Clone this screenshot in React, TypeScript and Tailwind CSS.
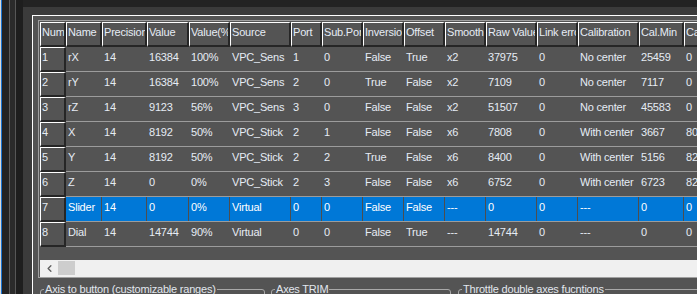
import { ChevronLeft } from "lucide-react";

type Col = { label: string; w: string };

const COLS: Col[] = [
  { label: "Name", w: "w-[36px]" },
  { label: "Precision", w: "w-[45px]" },
  { label: "Value", w: "w-[42px]" },
  { label: "Value(%)", w: "w-[41px]" },
  { label: "Source", w: "w-[61px]" },
  { label: "Port", w: "w-[31px]" },
  { label: "Sub.Port", w: "w-[41px]" },
  { label: "Inversion", w: "w-[41px]" },
  { label: "Offset", w: "w-[41px]" },
  { label: "Smooth", w: "w-[41px]" },
  { label: "Raw Value", w: "w-[51px]" },
  { label: "Link error", w: "w-[41px]" },
  { label: "Calibration", w: "w-[61px]" },
  { label: "Cal.Min", w: "w-[45px]" },
  { label: "Cal.Max", w: "w-[45px]" },
];

const ROWS: string[][] = [
  ["rX", "14", "16384", "100%", "VPC_Sens", "1", "0", "False", "True", "x2", "37975", "0", "No center", "25459", "0"],
  ["rY", "14", "16384", "100%", "VPC_Sens", "2", "0", "True", "False", "x2", "7109", "0", "No center", "7117", "0"],
  ["rZ", "14", "9123", "56%", "VPC_Sens", "3", "0", "False", "False", "x2", "51507", "0", "No center", "45583", "0"],
  ["X", "14", "8192", "50%", "VPC_Stick", "2", "1", "False", "False", "x6", "7808", "0", "With center", "3667", "8047"],
  ["Y", "14", "8192", "50%", "VPC_Stick", "2", "2", "True", "False", "x6", "8400", "0", "With center", "5156", "8252"],
  ["Z", "14", "0", "0%", "VPC_Stick", "2", "3", "False", "False", "x6", "6752", "0", "With center", "6723", "8288"],
  ["Slider", "14", "0", "0%", "Virtual", "0", "0", "False", "False", "---", "0", "0", "---", "0", "0"],
  ["Dial", "14", "14744", "90%", "Virtual", "0", "0", "False", "True", "---", "14744", "0", "---", "0", "0"],
];

const SELECTED = 6;

export default function App() {
  return (
    <div className="w-[697px] h-[294px] overflow-hidden flex bg-[#232323] font-['Liberation_Sans',Arial,sans-serif] text-[11px] leading-[14px] tracking-[-0.2px] text-[#e6ecf4]">
      {/* neighbouring window edges */}
      <div className="flex shrink-0">
        <div className="w-[1px] bg-[#d9d9d9]" />
        <div className="w-[1px] bg-[#1a74d2]" />
        <div className="w-[7px]" />
        <div className="w-[1px] bg-[#5c5c5c]" />
        <div className="w-[5px] bg-[#2b2b2b]" />
        <div className="w-[1px] bg-[#575757]" />
        <div className="w-[7px] bg-[#1e1e1e]" />
      </div>

      <div className="flex-1 min-w-0 flex flex-col pt-[7px]">
        <div className="flex-1 bg-[#3b3b3b] pl-[9px] pt-[8px]">
          <div className="h-full border-l border-t border-white bg-[#545454] pl-[5px] pt-[4px] flex flex-col">
            {/* grid */}
            <div className="border-l border-t border-b border-[#a0a0a0] pl-[1px] pt-[1px] flex flex-col">
              <div className="flex">
                <div className="w-[26px] h-[25px] shrink-0 border-t border-l border-t-white border-l-white border-r-2 border-b-2 border-r-[#262626] border-b-[#262626] pl-[1px] pt-[2px] overflow-hidden whitespace-nowrap">
                  Num
                </div>
                {COLS.map((c) => (
                  <div
                    key={c.label}
                    className={`${c.w} h-[25px] shrink-0 border-t border-l border-t-white border-l-white border-r-2 border-b-2 border-r-[#262626] border-b-[#262626] pl-[1px] pt-[2px] overflow-hidden whitespace-nowrap`}
                  >
                    {c.label}
                  </div>
                ))}
              </div>

              {ROWS.map((row, i) => (
                <div key={i} className="flex">
                  <div className="w-[26px] h-[25px] shrink-0 border-t border-l border-t-white border-l-white border-r-2 border-b-2 border-r-[#262626] border-b-[#262626] pl-[1px] pt-[2px]">
                    {i + 1}
                  </div>
                  <div className="flex flex-1 border-b border-[#9c9c9c]">
                    {row.map((v, j) => (
                      <div
                        key={j}
                        className={`${COLS[j].w} h-[24px] shrink-0 pl-[2px] pt-[3px] overflow-hidden whitespace-nowrap ${
                          i === SELECTED ? "bg-[#0078d7] border-r border-[#4e4e4e] text-white" : ""
                        }`}
                      >
                        {v}
                      </div>
                    ))}
                  </div>
                </div>
              ))}

              <div className="h-[13px]" />

              {/* horizontal scrollbar */}
              <div className="h-[17px] bg-[#f0f0f0] flex items-start">
                <div className="w-[18px] h-[17px] flex items-center justify-center text-[#606060]">
                  <ChevronLeft className="w-[11px] h-[11px]" strokeWidth={3} />
                </div>
                <div className="w-[17px] h-[14px] mt-[1px] bg-[#cdcdcd]" />
              </div>
            </div>

            {/* group boxes */}
            <div className="flex mt-[4px] ml-[2px] text-[#e2e7ee]">
              <fieldset className="w-[225px] h-[60px] shrink-0 border border-[#a8a8a8] rounded-[3px]">
                <legend className="ml-[3px] px-[1px]">Axis to button (customizable ranges)</legend>
              </fieldset>
              <fieldset className="w-[180px] h-[60px] shrink-0 ml-[6px] border border-[#a8a8a8] rounded-[3px]">
                <legend className="ml-[3px] px-[1px]">Axes TRIM</legend>
              </fieldset>
              <fieldset className="w-[300px] h-[60px] shrink-0 ml-[7px] border border-[#a8a8a8] rounded-[3px]">
                <legend className="ml-[3px] px-[1px]">Throttle double axes fucntions</legend>
              </fieldset>
            </div>
          </div>
        </div>
      </div>
    </div>
  );
}
